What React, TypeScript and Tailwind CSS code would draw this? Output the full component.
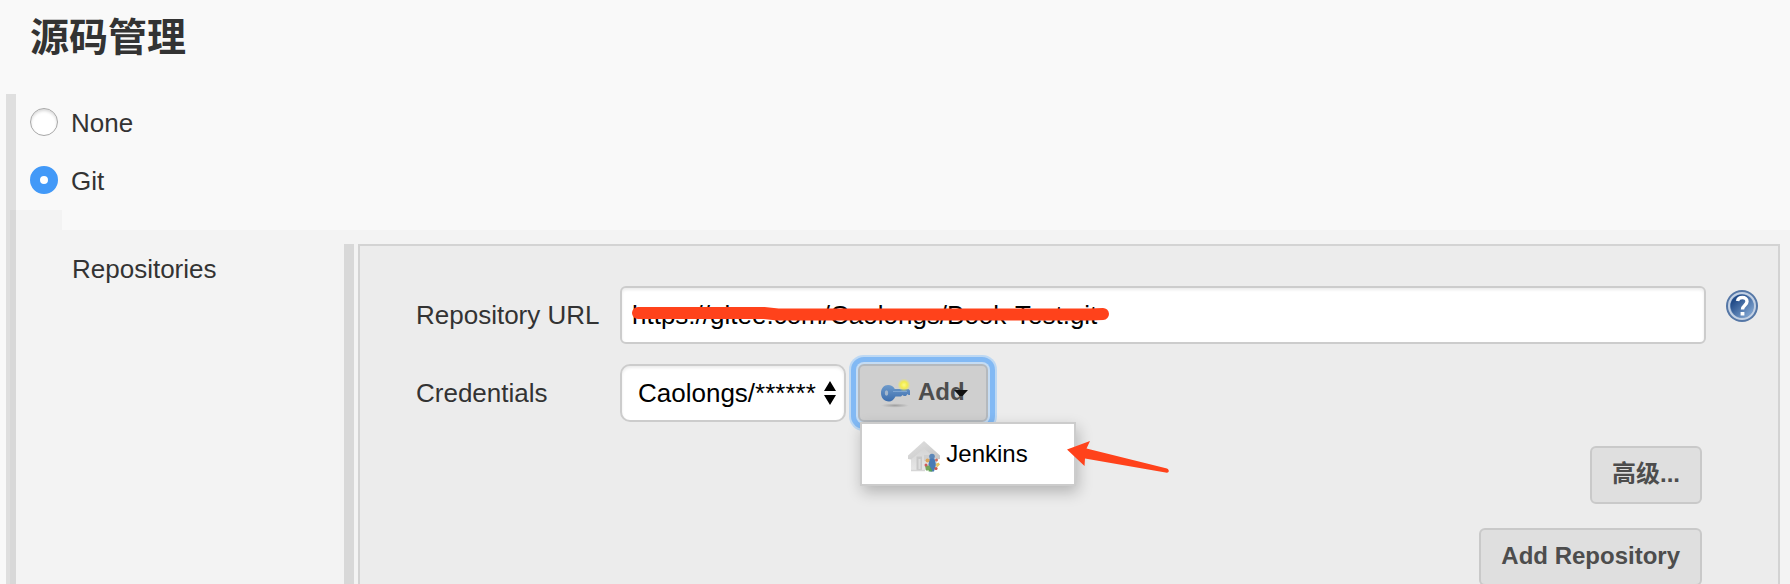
import { useState } from "react";

const buttonBase =
  "flex h-[58px] cursor-pointer items-center justify-center rounded-md border-2 border-[#c9c9c9] bg-[#dfdfdf] px-5 pb-0.5 text-2xl font-bold text-[#4d4d4d]";

function KeyIcon() {
  return (
    <svg viewBox="0 0 32 32" className="h-8 w-8 shrink-0" aria-hidden="true">
      <defs>
        <radialGradient id="spark">
          <stop offset="0" stopColor="#fbf98a" />
          <stop offset="0.5" stopColor="#f3ec4c" />
          <stop offset="1" stopColor="#efe765" stopOpacity="0" />
        </radialGradient>
        <linearGradient id="key" x1="0" y1="0" x2="0" y2="1">
          <stop offset="0" stopColor="#6f9bcb" />
          <stop offset="1" stopColor="#3c6dad" />
        </linearGradient>
        <radialGradient id="keyShadow">
          <stop offset="0" stopColor="#a0a0a0" />
          <stop offset="1" stopColor="#a0a0a0" stopOpacity="0" />
        </radialGradient>
      </defs>
      <ellipse cx="15" cy="29.500" rx="14" ry="2.200" fill="url(#keyShadow)" />
      <path
        d="M8 9c3 0 5.500 1.500 6.800 4H28.500l1.500 1.500V19h-1.500l-1-1-1.500 2h-2.200l-1.300-1-1.500 1.500h-5.500C14 23.500 11.500 25.500 9 25.500 4 25.500 1 21.500 1 17s3-8 7-8z"
        fill="url(#key)"
      />
      <ellipse cx="6.500" cy="17" rx="1.700" ry="2.800" fill="#a3b6cc" />
      <path d="M13 15.500h14" stroke="#7ea5d2" strokeWidth="1" />
      <circle cx="24" cy="9" r="6.500" fill="url(#spark)" />
    </svg>
  );
}

function HouseIcon() {
  return (
    <svg viewBox="0 0 32 32" className="h-8 w-8 shrink-0" aria-hidden="true">
      <defs>
        <linearGradient id="roof" x1="0" y1="0" x2="1" y2="1">
          <stop offset="0" stopColor="#e2e2e2" />
          <stop offset="1" stopColor="#c4c4c4" />
        </linearGradient>
        <linearGradient id="wall" x1="0" y1="0" x2="0" y2="1">
          <stop offset="0" stopColor="#d2d2d2" />
          <stop offset="1" stopColor="#e6e6e6" />
        </linearGradient>
      </defs>
      <path d="M3 15L16 5l13 10v15H3z" fill="url(#wall)" />
      <path d="M16 1L0 15.500V19l3 .5L16 8.500 29 19.500l3-.5v-3.500z" fill="url(#roof)" />
      <path d="M8.500 16.500h5.500V30H8.500z" fill="#c8c8c8" />
      <path d="M10.500 19h2v10h-2z" fill="#dedede" />
      <path d="M16 15h6v6h-6z" fill="#cfcfcf" />
      <path d="M3 30.500h14" stroke="#d6d6d6" strokeWidth="1.500" />
      <circle cx="24" cy="16.500" r="2.800" fill="#5c87b8" />
      <path d="M21.500 18.500h5l1.500 6-2 7h-3.500l-2-7z" fill="#4a7bb5" />
      <circle cx="19.500" cy="20.500" r="2" fill="#dca45a" />
      <path d="M17 25.500h4.500l1.500 5h-5z" fill="#75a65a" />
      <circle cx="18" cy="25" r="1.500" fill="#cf5a5a" />
      <circle cx="28.500" cy="20" r="1.500" fill="#cf6a5e" />
      <path d="M27.500 24l3-1.500 1.500 2-3 3z" fill="#e6c462" />
      <circle cx="28" cy="28.500" r="1.600" fill="#c9574d" />
      <path d="M22.500 27l2 4.500h-4z" fill="#59a052" />
    </svg>
  );
}

function HelpIcon() {
  return (
    <svg viewBox="0 0 32 32" className="h-8 w-8" aria-hidden="true">
      <defs>
        <linearGradient id="help" x1="0" y1="0" x2="1" y2="1">
          <stop offset="0.200" stopColor="#204a87" />
          <stop offset="0.850" stopColor="#7ba0cd" />
        </linearGradient>
      </defs>
      <circle cx="16" cy="16" r="16" fill="#5577a6" />
      <circle cx="16" cy="16" r="13" fill="#7898c2" stroke="#c3d1e4" strokeWidth="2" />
      <circle cx="16" cy="16" r="11.500" fill="url(#help)" />
      <path
        d="M11.500 11c.5-2.500 2.500-3.500 4.800-3.500 2.700 0 4.700 1.500 4.700 4 0 3.800-4.500 3.600-4.500 8"
        fill="none"
        stroke="#fff"
        strokeWidth="3.400"
      />
      <rect x="14.600" y="22" width="3.800" height="3.500" fill="#fff" />
    </svg>
  );
}

function ScmRadio({ label, checked, onSelect }: { label: string; checked: boolean; onSelect: () => void }) {
  return (
    <label className="flex h-[58px] items-center gap-[13px] pb-0.5 text-[26px] leading-8">
      <input
        type="radio"
        name="scm"
        checked={checked}
        onChange={onSelect}
        className="h-7 w-7 appearance-none rounded-full border border-[#a8a8a8] bg-white shadow-[inset_0_2px_3px_rgba(0,0,0,0.15)] checked:border-[10px] checked:border-[#4299f8] checked:shadow-none"
      />
      <span className="pt-0.5">{label}</span>
    </label>
  );
}

export default function App() {
  const [scm, setScm] = useState("git");
  const [url, setUrl] = useState("https://gitee.com/Caolongs/Book-Test.git");

  return (
    <main className="flex h-screen flex-col overflow-hidden bg-[#f9f9f9] font-['Liberation_Sans','Noto_Sans_CJK_SC',sans-serif] text-[#333]">
      <h1 className="h-[94px] shrink-0 pt-2.5 pl-[30px] text-[39px] leading-[56px] font-bold">源码管理</h1>

      <div className="ml-1.5 shrink-0 border-l-10 border-[#dfdfdf] pl-3.5">
        <ScmRadio label="None" checked={scm === "none"} onSelect={() => setScm("none")} />
        <ScmRadio label="Git" checked={scm === "git"} onSelect={() => setScm("git")} />
      </div>

      <div className="ml-1.5 flex min-h-0 flex-1 border-l-4 border-[#dfdfdf]">
        <div className="w-[52px] shrink-0 border-l-6 border-[#d8d8d8] bg-[#f3f3f3]" />
        <section className="mt-5 flex min-w-0 flex-1 bg-[#f3f3f3] pt-3.5 pr-2.5 pl-2.5">
          <h2 className="w-[272px] shrink-0 pt-[9px] text-[26px] leading-8">Repositories</h2>

          <div className="flex min-w-0 flex-1 border-l-10 border-[#d8d8d8] pl-1">
            <form
              className="min-w-0 flex-1 border-2 border-b-0 border-[#d3d3d3] bg-[#ececec] pt-10 pr-5 pl-[56px]"
              onSubmit={(event) => event.preventDefault()}
            >
              <div className="flex">
                <label htmlFor="repository-url" className="w-[204px] shrink-0 pt-[13px] text-[26px] leading-8">
                  Repository URL
                </label>
                <div className="relative min-w-0 flex-1">
                  <input
                    id="repository-url"
                    type="text"
                    value={url}
                    onChange={(event) => setUrl(event.target.value)}
                    className="h-[58px] w-full rounded-md border-2 border-[#ccc] bg-white px-2.5 text-[26px] text-black shadow-[inset_0_2px_3px_rgba(0,0,0,0.08)]"
                  />
                  <svg
                    viewBox="0 0 480 20"
                    className="pointer-events-none absolute top-[17px] left-2.5 h-5 w-[480px]"
                    aria-hidden="true"
                  >
                    <path
                      d="M8 10H134L148 11.500H460L473 11"
                      fill="none"
                      stroke="#ff421b"
                      strokeWidth="12"
                      strokeLinecap="round"
                      strokeLinejoin="round"
                    />
                  </svg>
                </div>
                <button type="button" aria-label="Help" className="mt-1 ml-5 h-8 w-8 shrink-0 cursor-pointer">
                  <HelpIcon />
                </button>
              </div>

              <div className="mt-5 flex">
                <label htmlFor="credentials" className="w-[204px] shrink-0 pt-[13px] text-[26px] leading-8">
                  Credentials
                </label>
                <div className="relative w-[226px] shrink-0">
                  <select
                    id="credentials"
                    className="h-[58px] w-full appearance-none rounded-[10px] border-2 border-[#ccc] bg-white pl-4 text-[26px] text-black shadow-[inset_0_2px_3px_rgba(0,0,0,0.08)]"
                  >
                    <option>Caolongs/******</option>
                  </select>
                  <svg
                    viewBox="0 0 12 24"
                    className="pointer-events-none absolute top-[17px] right-2.5 h-6 w-3"
                    aria-hidden="true"
                  >
                    <path d="M6 0l6 10H0zM6 24l6-10H0z" fill="#000" />
                  </svg>
                </div>

                <div className="relative ml-3 w-[130px] shrink-0">
                  <button
                    type="button"
                    aria-haspopup="menu"
                    aria-expanded="true"
                    className="flex h-[58px] w-full cursor-pointer items-center gap-1.5 rounded-md border-2 border-[#b4b9be] bg-[#cfcfcf] pb-0.5 pl-5 text-2xl font-bold text-[#4d4d4d] shadow-[0_0_0_2px_#c5dcf3,0_0_0_7px_#82b9f4,0_0_0_9px_#bdd8f3]"
                  >
                    <KeyIcon />
                    Add
                  </button>
                  <svg
                    viewBox="0 0 14 8"
                    className="pointer-events-none absolute top-[26px] right-5 h-2 w-3.5"
                    aria-hidden="true"
                  >
                    <path d="M0 0h14L8.500 6h-3z" fill="#111" />
                  </svg>
                  <div
                    role="menu"
                    className="absolute top-full left-0.5 w-[216px] border-2 border-[#ccc] bg-white shadow-[2px_6px_14px_rgba(0,0,0,0.24)]"
                  >
                    <button
                      type="button"
                      role="menuitem"
                      className="flex h-[60px] w-full cursor-pointer items-center justify-center gap-1.5 text-2xl text-black"
                    >
                      <span className="pt-1">
                        <HouseIcon />
                      </span>
                      Jenkins
                    </button>
                  </div>
                  <svg
                    viewBox="0 0 104 34"
                    className="pointer-events-none absolute top-[76px] left-[208px] h-[34px] w-[104px]"
                    aria-hidden="true"
                  >
                    <path
                      d="M1 9.500L24 1l-3.500 7.500L101 28.500q2.500 1.500 1.500 3.500-1 1-3 .5L19 18.500l-.5 7.500z"
                      fill="#ff421b"
                    />
                  </svg>
                </div>
              </div>

              <div className="mt-6 flex flex-col items-end gap-6 pr-14">
                <button type="button" className={buttonBase}>
                  高级...
                </button>
                <button type="button" className={buttonBase}>
                  Add Repository
                </button>
              </div>
            </form>
          </div>
        </section>
      </div>
    </main>
  );
}
